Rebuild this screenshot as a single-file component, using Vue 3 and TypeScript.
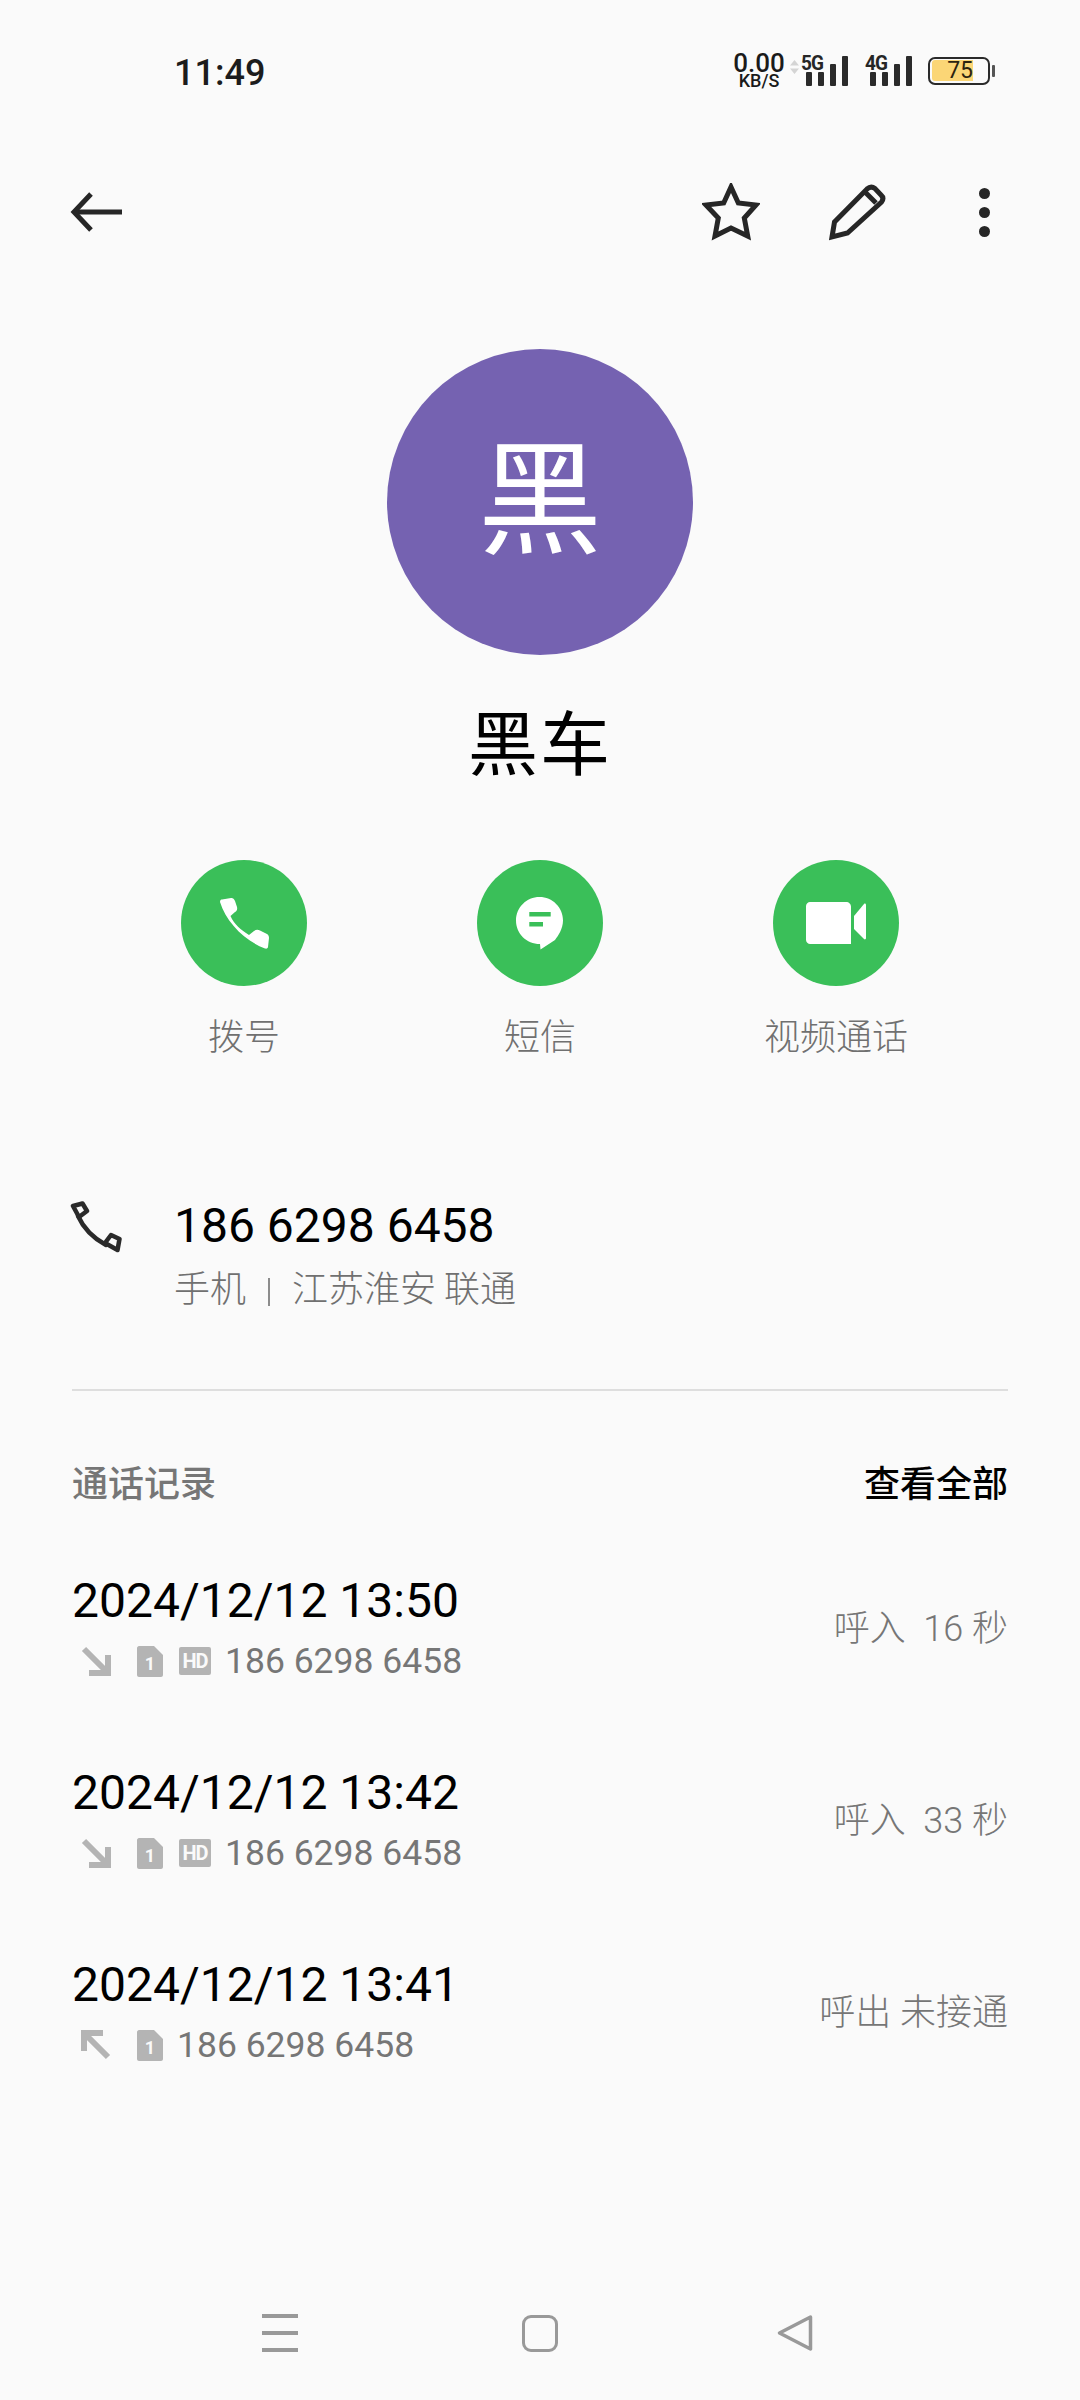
<script setup lang="ts">
/** Contact detail page: header, quick actions, phone row and call history */
interface Action {
  label: string;
  icon: "phone" | "message" | "video";
}
interface CallRow {
  time: string;
  outgoing: boolean;
  hd: boolean;
  result: string;
}

const signalBars = [
  { x: 0, y: 16, h: 14 },
  { x: 12, y: 16, h: 14 },
  { x: 24, y: 8, h: 22 },
  { x: 36, y: 0, h: 30 },
];

const actions: Action[] = [
  { label: "拨号", icon: "phone" },
  { label: "短信", icon: "message" },
  { label: "视频通话", icon: "video" },
];

const calls: CallRow[] = [
  { time: "2024/12/12 13:50", outgoing: false, hd: true, result: "呼入  16 秒" },
  { time: "2024/12/12 13:42", outgoing: false, hd: true, result: "呼入  33 秒" },
  { time: "2024/12/12 13:41", outgoing: true, hd: false, result: "呼出 未接通" },
];
</script>

<template>
  <div class="page">
    <header class="status">
      <span class="clock">11:49</span>
      <div class="status-right">
        <div class="speed"><span class="speed-num">0.00</span><span class="speed-unit">KB/S</span></div>
        <svg class="updown" width="9" height="14" viewBox="0 0 9 14"><path d="M4.5 0 9 5.5H0zM0 8.500h9L4.500 14z" fill="#d4d4d4" /></svg>
        <div class="net net-5g">
          <span class="net-label">5G</span>
          <svg width="42" height="30" viewBox="0 0 42 30">
            <rect v-for="b in signalBars" :key="b.x" :x="b.x" :y="b.y" width="6" :height="b.h" rx="1" fill="#2a2a2a" />
          </svg>
        </div>
        <div class="net net-4g">
          <span class="net-label">4G</span>
          <svg width="43" height="30" viewBox="0 0 43 30">
            <rect v-for="b in signalBars" :key="b.x" :x="b.x" :y="b.y" width="6" :height="b.h" rx="1" fill="#2a2a2a" />
          </svg>
        </div>
        <div class="battery">
          <div class="battery-body"><div class="battery-fill">75</div></div>
          <span class="battery-nub"></span>
        </div>
      </div>
    </header>

    <nav class="toolbar">
      <svg width="54" height="42" viewBox="0 0 54 42" fill="none" stroke="#262626" stroke-width="5">
        <path d="M4 21H52" />
        <path d="M21 3 4 21 21 39" />
      </svg>
      <div class="toolbar-right">
        <svg width="58" height="58" viewBox="0 0 58 58" fill="none" stroke="#262626" stroke-width="5" stroke-linejoin="miter">
          <path d="M29 4 36.300 20 54 22 42.300 35 45.700 53 29 45 13 53 16.300 35 4 22 21.700 20Z" />
        </svg>
        <svg class="tool-pen" width="58" height="58" viewBox="0 0 58 58" fill="none" stroke="#262626" stroke-width="5" stroke-linejoin="miter">
          <path d="M3 54 5.500 39 38 6Q42 2.500 46 5.500L52 12Q55.500 15 52.500 19L18.500 50Z" />
          <path d="M35 8 47 20" />
        </svg>
        <div class="dots"><i></i><i></i><i></i></div>
      </div>
    </nav>

    <div class="avatar">黑</div>
    <h1 class="name">黑车</h1>

    <section class="actions">
      <div v-for="a in actions" :key="a.label" class="action">
        <div class="action-circle">
          <svg v-if="a.icon === 'phone'" width="52" height="52" viewBox="0 0 52 52" fill="#fff">
            <path d="M2 5C2 3 3 2.500 4 2.500L13 1C15 .8 16 2 17 4L19 10C19.500 12 19 14 17 15L12.500 19C16 27 23 33 31 38L36 34C38 32.500 40 32.500 42 33.500L49 37C50.500 38 51 39 51 41L50 50C50 51 49 52 47 51.500 27 44 8 25 2 5Z" />
          </svg>
          <svg v-else-if="a.icon === 'message'" width="48" height="53" viewBox="0 0 48 53">
            <path d="M23.500 0C36.500 0 47 10.500 47 23.500 47 32 42 39 39 43L24.500 52.500 24 47C10.500 47 0 36.500 0 23.500 0 10.500 10.500 0 23.500 0Z" fill="#fff" />
            <path d="M13.300 15H34.700V19.500H13.300ZM13.300 25H27V29.500H13.300Z" fill="#3abf59" />
          </svg>
          <svg v-else width="60" height="42" viewBox="0 0 60 42" fill="#fff">
            <path d="M4 0H40C43 0 45 2 45 5V42H4C2 42 0 40 0 38V4C0 2 2 0 4 0Z" />
            <path d="M48 14 58 2C59 1 60 2 60 3V36C60 37 59 38 58 37L48 27Z" />
          </svg>
        </div>
        <span class="action-label">{{ a.label }}</span>
      </div>
    </section>

    <section class="number">
      <svg class="number-icon" width="52" height="52" viewBox="0 0 52 52" fill="none" stroke="#2a2a2a" stroke-width="4.500" stroke-linejoin="round" stroke-linecap="round">
        <path d="M3 5 12.500 2.500 17 10 9 16Z" />
        <path d="M8 15C13 26 23 37 36 44" />
        <path d="M35 42 41 34 49.500 38 47.500 49Z" />
      </svg>
      <div class="number-text">
        <div class="number-main">186 6298 6458</div>
        <div class="number-sub">手机<span class="sep"></span>江苏淮安 联通</div>
      </div>
    </section>

    <hr class="divider" />

    <div class="history-head">
      <span class="history-title">通话记录</span>
      <span class="history-all">查看全部</span>
    </div>

    <ul class="calls">
      <li v-for="c in calls" :key="c.time" class="call">
        <div class="call-left">
          <div class="call-time">{{ c.time }}</div>
          <div class="call-meta">
            <svg class="call-dir" width="30" height="30" viewBox="0 0 30 30" fill="none" stroke="#b4b4b4" stroke-width="6">
              <path v-if="c.outgoing" d="M27 27 5 5M3 21V3H22" />
              <path v-else d="M3 3 25 25M27 9V27H8" />
            </svg>
            <svg class="call-sim" width="26" height="31" viewBox="0 0 26 31">
              <path d="M2 0H17L26 9V29C26 30 25 31 24 31H2C1 31 0 30 0 29V2C0 1 1 0 2 0Z" fill="#b4b4b4" />
              <text x="13" y="24" text-anchor="middle" class="sim-num">1</text>
            </svg>
            <span v-if="c.hd" class="call-hd">HD</span>
            <span class="call-num">186 6298 6458</span>
          </div>
        </div>
        <span class="call-result">{{ c.result }}</span>
      </li>
    </ul>

    <footer class="navbar">
      <div class="nav-menu"><i></i><i></i><i></i></div>
      <span class="nav-home"></span>
      <svg width="36" height="38" viewBox="0 0 36 38" fill="none" stroke="#999" stroke-width="3.500" stroke-linejoin="round">
        <path d="M33.500 3 2.500 19 33.500 35Z" />
      </svg>
    </footer>
  </div>
</template>

<style>
html,
body {
  margin: 0;
  background: #fafafa;
}
</style>

<style scoped>
.page {
  width: 1080px;
  height: 2400px;
  display: flex;
  flex-direction: column;
  background: #fafafa;
  color: #000;
  font-family: Roboto, "Noto Sans CJK SC", sans-serif;
  overflow: hidden;
}

.status {
  height: 142px;
  box-sizing: border-box;
  display: flex;
  align-items: center;
  justify-content: space-between;
  padding: 0 85px 0 174px;
}

.clock {
  margin-top: 3px;
  font-size: 36px;
  font-weight: 500;
  color: #1c1c1c;
}

.status-right {
  display: flex;
  align-items: center;
}

.speed {
  width: 54px;
  display: flex;
  flex-direction: column;
  align-items: center;
  font-weight: 500;
  color: #1a1a1a;
}

.speed-num {
  font-size: 26px;
  line-height: 20px;
}

.speed-unit {
  font-size: 18px;
  line-height: 16px;
}

.updown {
  margin: -8px 0 0 4px;
}

.net {
  position: relative;
  width: 42px;
  height: 30px;
}

.net-5g {
  margin-left: 7px;
}

.net-4g {
  margin-left: 22px;
}

.net-label {
  position: absolute;
  left: -5px;
  top: -3px;
  font-size: 20px;
  font-weight: 700;
  line-height: 20px;
  color: #262626;
  letter-spacing: -1px;
  transform: scaleX(0.95);
  transform-origin: left top;
}

.net svg {
  display: block;
}

.battery {
  margin-left: 16px;
  display: flex;
  align-items: center;
  gap: 2px;
}

.battery-body {
  width: 62px;
  height: 28px;
  box-sizing: border-box;
  border: 2.500px solid #2a2a2a;
  border-radius: 7px;
  padding: 1px 0 0 2px;
}

.battery-fill {
  width: 41px;
  height: 21px;
  border-radius: 3px 0 0 3px;
  background: #fbd676;
  font-size: 23px;
  line-height: 21px;
  text-align: right;
  color: #2c2410;
}

.battery-nub {
  width: 3px;
  height: 12px;
  background: #555;
  border-radius: 1px;
}

.toolbar {
  height: 140px;
  box-sizing: border-box;
  padding: 0 90px 0 70px;
  display: flex;
  align-items: center;
  justify-content: space-between;
}

.toolbar-right {
  display: flex;
  align-items: center;
}

.tool-pen {
  margin-left: 69px;
}

.dots {
  margin-left: 92px;
  display: flex;
  flex-direction: column;
  gap: 8px;
}

.dots i {
  display: block;
  width: 11px;
  height: 11px;
  border-radius: 50%;
  background: #262626;
}

.avatar {
  margin: 67px auto 0;
  width: 306px;
  height: 306px;
  border-radius: 50%;
  background: #7562b1;
  color: #fff;
  font-size: 124px;
  line-height: 283px;
  text-align: center;
  font-family: "Noto Sans CJK SC", sans-serif;
}

.name {
  margin: 37px 0 0;
  text-align: center;
  font-size: 70px;
  line-height: 96px;
  font-weight: 400;
  letter-spacing: 2px;
  font-family: "Noto Sans CJK SC", sans-serif;
}

.actions {
  margin-top: 72px;
  display: grid;
  grid-template-columns: repeat(3, 296px);
  justify-content: center;
}

.action {
  display: flex;
  flex-direction: column;
  align-items: center;
}

.action-circle {
  width: 126px;
  height: 126px;
  border-radius: 50%;
  background: #3abf59;
  display: flex;
  align-items: center;
  justify-content: center;
}

.action-label {
  margin-top: 22px;
  font-size: 36px;
  line-height: 52px;
  color: #707070;
  font-family: "Noto Sans CJK SC", sans-serif;
  font-weight: 300;
}

.number {
  margin-top: 134px;
  padding-left: 70px;
  display: flex;
  align-items: flex-start;
}

.number-icon {
  margin-top: 7px;
}

.number-text {
  margin-left: 52px;
}

.number-main {
  font-size: 48px;
  line-height: 64px;
}

.number-sub {
  margin-top: 2px;
  font-size: 36px;
  line-height: 52px;
  color: #707070;
  font-family: "Noto Sans CJK SC", sans-serif;
  font-weight: 300;
}

.sep {
  display: inline-block;
  width: 2px;
  height: 28px;
  margin: 0 22px;
  vertical-align: -4px;
  background: #8c8c8c;
}

.divider {
  margin: 77px 72px 0;
  border: 0;
  height: 2px;
  background: #dedede;
}

.history-head {
  margin: 64px 72px 0;
  display: flex;
  justify-content: space-between;
  font-size: 36px;
  line-height: 52px;
  font-family: "Noto Sans CJK SC", sans-serif;
  font-weight: 500;
}

.history-title {
  color: #767676;
}

.calls {
  list-style: none;
  margin: 62px 72px 0;
  padding: 0;
}

.call {
  height: 192px;
  display: flex;
  align-items: flex-start;
  justify-content: space-between;
}

.call-time {
  font-size: 48px;
  line-height: 64px;
}

.call-meta {
  margin-top: 8px;
  height: 40px;
  display: flex;
  align-items: center;
  font-size: 35.500px;
  color: #767676;
}

.call-dir {
  margin-left: 9px;
}

.call-sim {
  margin-left: 26px;
}

.sim-num {
  font-size: 18px;
  font-weight: 700;
  fill: #fafafa;
}

.call-hd {
  margin-left: 16px;
  width: 32px;
  height: 28px;
  border-radius: 2px;
  background: #b4b4b4;
  color: #fafafa;
  font-size: 20px;
  font-weight: 700;
  line-height: 28px;
  text-align: center;
  letter-spacing: -1px;
}

.call-sim + .call-num {
  margin-left: 14px;
}

.call-hd + .call-num {
  margin-left: 14px;
}

.call-result {
  margin-top: 34px;
  font-size: 36px;
  line-height: 52px;
  color: #767676;
  white-space: pre;
  font-family: Roboto, "Noto Sans CJK SC", sans-serif;
  font-weight: 300;
}

.navbar {
  margin-top: auto;
  height: 130px;
  box-sizing: border-box;
  padding: 0 267px 48px 262px;
  display: flex;
  align-items: flex-end;
  justify-content: space-between;
}

.nav-menu {
  width: 36px;
  display: flex;
  flex-direction: column;
  gap: 13px;
}

.nav-menu i {
  display: block;
  height: 4px;
  background: #999;
}

.nav-home {
  width: 36px;
  height: 37px;
  margin-left: 4px;
  box-sizing: border-box;
  border: 3.500px solid #999;
  border-radius: 9px;
}
</style>
